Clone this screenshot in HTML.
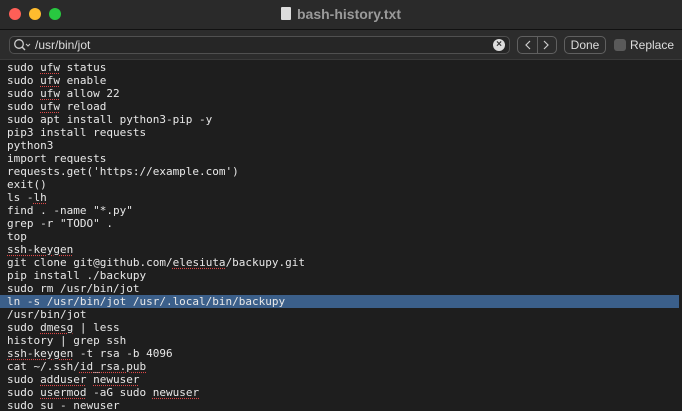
<!DOCTYPE html>
<html><head><meta charset="utf-8"><style>
*{margin:0;padding:0;box-sizing:border-box}
body{width:682px;height:411px;background:#1e1e1e;overflow:hidden;font-family:"Liberation Sans",sans-serif;position:relative}
.title{position:absolute;left:0;top:0;width:682px;height:30px;background:#2a2a2a;border-bottom:1px solid #111}
.dot{position:absolute;top:8px;width:12px;height:12px;border-radius:50%}
.ttl{position:absolute;top:6px;left:0;width:682px;text-align:center;color:#9a9a9a;font-size:14px;font-weight:bold}
.find{position:absolute;left:0;top:30px;width:682px;height:30px;background:#2c2c2c;border-bottom:1px solid #3a3a3a}
.field{position:absolute;left:9px;top:6px;width:501px;height:18px;border:1px solid #505050;border-radius:5px;background:#262626}
.btn{position:absolute;top:6px;height:18px;border:1px solid #606060;border-radius:5px;color:#ddd;font-size:12px;text-align:center;line-height:16px}
.txt{position:absolute;left:0;top:61px;width:682px;height:350px;overflow:hidden;font-family:"DejaVu Sans Mono","Liberation Mono",monospace;font-size:11px;line-height:13px;color:#e8e8e8}
.txt div{padding-left:7px;height:13px;white-space:pre}
.sel{background:#3b5f8a;width:679px}
u{text-decoration:underline dotted #e04848;text-underline-offset:2px}
</style></head><body>
<div class="title">
<div class="dot" style="left:9px;background:#fe5f57"></div>
<div class="dot" style="left:29px;background:#febc2e"></div>
<div class="dot" style="left:49px;background:#28c840"></div>
<div class="ttl"><span style="display:inline-block;width:10px;height:13px;background:#ddd;vertical-align:-1px;margin-right:6px;border-radius:1px"></span>bash-history.txt</div>
</div>
<div class="find">
<div class="field">
<svg width="20" height="16" style="position:absolute;left:3px;top:0" viewBox="0 0 20 16"><circle cx="6" cy="7" r="4.3" stroke="#ccc" stroke-width="1.3" fill="none"/><line x1="9" y1="10" x2="12" y2="13" stroke="#ccc" stroke-width="1.4"/><polyline points="13,7 15,9 17,7" stroke="#ccc" fill="none"/></svg>
<span style="position:absolute;left:25px;top:1px;color:#ddd;font-size:12px">/usr/bin/jot</span>
<span style="position:absolute;right:4px;top:2px;width:12px;height:12px;border-radius:50%;background:#ddd;color:#333;font-size:10px;line-height:12px;text-align:center;font-weight:bold">×</span>
</div>
<div class="btn" style="left:517px;width:40px"><span style="position:absolute;left:19px;top:0;width:1px;height:16px;background:#606060"></span><svg width="38" height="16" style="position:absolute;left:0;top:0"><polyline points="12,4 8,8 12,12" stroke="#ccc" fill="none" stroke-width="1.2"/><polyline points="26,4 30,8 26,12" stroke="#ccc" fill="none" stroke-width="1.2"/></svg></div>
<div class="btn" style="left:564px;width:42px">Done</div>
<div style="position:absolute;left:614px;top:9px;width:12px;height:12px;border-radius:3px;background:#5a5a5a"></div>
<div style="position:absolute;left:630px;top:8px;color:#ddd;font-size:12px">Replace</div>
</div>
<div class="txt"><div>sudo <u>ufw</u> status</div><div>sudo <u>ufw</u> enable</div><div>sudo <u>ufw</u> allow 22</div><div>sudo <u>ufw</u> reload</div><div>sudo apt install python3-pip -y</div><div>pip3 install requests</div><div>python3</div><div>import requests</div><div>requests.get('https://example.com')</div><div>exit()</div><div>ls -<u>lh</u></div><div>find . -name "*.py"</div><div>grep -r "TODO" .</div><div>top</div><div><u>ssh-keygen</u></div><div>git clone git@github.com/<u>elesiuta</u>/backupy.git</div><div>pip install ./backupy</div><div>sudo rm /usr/bin/jot</div><div class="sel">ln -s /usr/bin/jot /usr/.local/bin/backupy</div><div>/usr/bin/jot</div><div>sudo <u>dmesg</u> | less</div><div>history | grep ssh</div><div><u>ssh-keygen</u> -t rsa -b 4096</div><div>cat ~/.ssh/<u>id_rsa.pub</u></div><div>sudo <u>adduser</u> <u>newuser</u></div><div>sudo <u>usermod</u> -aG sudo <u>newuser</u></div><div>sudo su - newuser</div></div>
</body></html>
